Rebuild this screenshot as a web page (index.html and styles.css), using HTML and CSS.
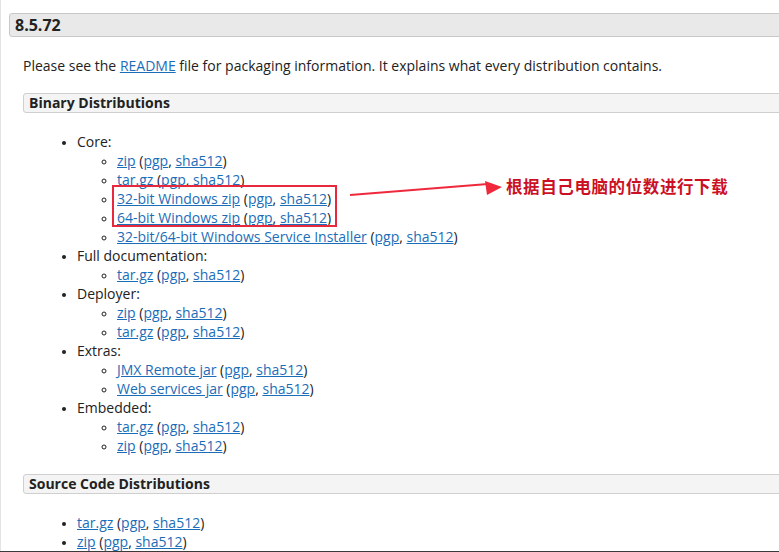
FILE: index.html
```html
<!DOCTYPE html>
<html lang="en">

<head>
    <meta charset="UTF-8">
    <meta name="viewport" content="width=device-width, initial-scale=1.0">
    <title>Apache Tomcat 8.5.72</title>
    <link rel="stylesheet" href="styles.css">
</head>

<body>
    <div class="page">
        <h3 class="version">8.5.72</h3>
        <p class="intro">Please see the <a href="#">README</a> file for packaging information. It explains what every distribution contains.</p>

        <h4 class="section-head">Binary Distributions</h4>
        <ul class="dist-list">
            <li>Core:
                <ul>
                    <li><a href="#">zip</a> (<a href="#">pgp</a>, <a href="#">sha512</a>)</li>
                    <li><a href="#">tar.gz</a> (<a href="#">pgp</a>, <a href="#">sha512</a>)</li>
                    <li><a href="#">32-bit Windows zip</a> (<a href="#">pgp</a>, <a href="#">sha512</a>)</li>
                    <li><a href="#">64-bit Windows zip</a> (<a href="#">pgp</a>, <a href="#">sha512</a>)</li>
                    <li><a href="#">32-bit/64-bit Windows Service Installer</a> (<a href="#">pgp</a>, <a href="#">sha512</a>)</li>
                </ul>
            </li>
            <li>Full documentation:
                <ul>
                    <li><a href="#">tar.gz</a> (<a href="#">pgp</a>, <a href="#">sha512</a>)</li>
                </ul>
            </li>
            <li>Deployer:
                <ul>
                    <li><a href="#">zip</a> (<a href="#">pgp</a>, <a href="#">sha512</a>)</li>
                    <li><a href="#">tar.gz</a> (<a href="#">pgp</a>, <a href="#">sha512</a>)</li>
                </ul>
            </li>
            <li>Extras:
                <ul>
                    <li><a href="#">JMX Remote jar</a> (<a href="#">pgp</a>, <a href="#">sha512</a>)</li>
                    <li><a href="#">Web services jar</a> (<a href="#">pgp</a>, <a href="#">sha512</a>)</li>
                </ul>
            </li>
            <li>Embedded:
                <ul>
                    <li><a href="#">tar.gz</a> (<a href="#">pgp</a>, <a href="#">sha512</a>)</li>
                    <li><a href="#">zip</a> (<a href="#">pgp</a>, <a href="#">sha512</a>)</li>
                </ul>
            </li>
        </ul>

        <h4 class="section-head source-head">Source Code Distributions</h4>
        <ul class="dist-list source-list">
            <li><a href="#">tar.gz</a> (<a href="#">pgp</a>, <a href="#">sha512</a>)</li>
            <li><a href="#">zip</a> (<a href="#">pgp</a>, <a href="#">sha512</a>)</li>
        </ul>

        <!-- annotation drawn over the screenshot -->
        <div class="mark-box"></div>
        <svg class="mark-arrow" width="160" height="30" viewBox="0 0 160 30">
            <line x1="0" y1="17" x2="138" y2="6" stroke="#f0283c" stroke-width="2"/>
            <polygon points="152,5 135,-1 137,13" fill="#f0283c" transform="translate(0,4)"/>
        </svg>
        <div class="mark-text">根据自己电脑的位数进行下载</div>
    </div>
    <div class="bottom-edge"></div>
</body>

</html>
```

FILE: styles.css
```css
body {
    margin: 0;
    color: #222;
    font-family: "Open Sans", "Liberation Sans", sans-serif;
    font-size: 14px;
    line-height: 19px;
    background-color: #fff;
}

.page {
    position: relative;
    padding-top: 13px;
    overflow: hidden;
    height: 552px;
    box-shadow: inset 1px 0 0 #e4e4e4;
}

a {
    color: #1c6db8;
    text-decoration: underline;
}

.version {
    margin: 0 -20px 0 9px;
    padding-left: 5px;
    height: 22px;
    line-height: 22px;
    font-size: 16px;
    font-weight: bold;
    background-color: #e9e9e9;
    border: 1px solid #c8c8c8;
    border-radius: 3px;
}

.intro {
    margin: 19px 0 0 23px;
}

.section-head {
    margin: 18px -20px 0 23px;
    padding-left: 5px;
    height: 18px;
    line-height: 18px;
    font-size: 14px;
    font-weight: bold;
    background-color: #f4f4f4;
    border: 1px solid #cfcfcf;
    border-radius: 3px;
}

.dist-list {
    margin: 19px 0 0 23px;
    padding-left: 54px;
    list-style: disc;
}

.dist-list ul {
    margin: 0;
    padding-left: 40px;
    list-style: circle;
}

.dist-list li::marker {
    font-size: 12px;
}

.source-head {
    margin-top: 19px;
}

.source-list {
    margin-top: 19px;
}

.mark-box {
    position: absolute;
    left: 112px;
    top: 185px;
    width: 221px;
    height: 38px;
    border: 2px solid #e8283c;
}

.mark-arrow {
    position: absolute;
    left: 350px;
    top: 178px;
}

.mark-text {
    position: absolute;
    left: 506px;
    top: 175px;
    font-family: "Noto Sans CJK SC", sans-serif;
    font-size: 16.5px;
    line-height: 22px;
    font-weight: bold;
    color: #cc1024;
    letter-spacing: 0.6px;
}

.bottom-edge {
    position: fixed;
    left: 0;
    right: 0;
    bottom: 0;
    height: 1px;
    background-color: #3a3a3a;
}
```
